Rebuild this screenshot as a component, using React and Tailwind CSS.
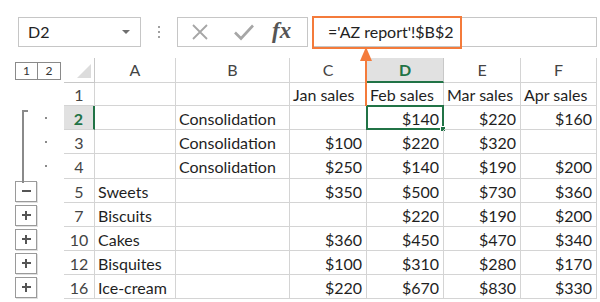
import React from "react";

const GRID = "border-[#d4d4d4]";

const cols = [
  { key: "a", label: "A", w: "w-[81px]" },
  { key: "b", label: "B", w: "w-[114px]" },
  { key: "c", label: "C", w: "w-[77px]" },
  { key: "d", label: "D", w: "w-[77px]" },
  { key: "e", label: "E", w: "w-[77px]" },
  { key: "f", label: "F", w: "w-[76px]" },
];

const rows = [
  { n: "1", h: "h-[23px]", c: "Jan sales", d: "Feb sales", e: "Mar sales", f: "Apr sales", head: true },
  { n: "2", h: "h-[24px]", b: "Consolidation", d: "$140", e: "$220", f: "$160", o: "dot", sel: true },
  { n: "3", h: "h-[24px]", b: "Consolidation", c: "$100", d: "$220", e: "$320", o: "dot" },
  { n: "4", h: "h-[25px]", b: "Consolidation", c: "$250", d: "$140", e: "$190", f: "$200", o: "dot" },
  { n: "5", h: "h-[24px]", a: "Sweets", c: "$350", d: "$500", e: "$730", f: "$360", o: "minus" },
  { n: "7", h: "h-[24px]", a: "Biscuits", d: "$220", e: "$190", f: "$200", o: "plus" },
  { n: "10", h: "h-[24px]", a: "Cakes", c: "$360", d: "$450", e: "$470", f: "$340", o: "plus" },
  { n: "12", h: "h-[24px]", a: "Bisquites", c: "$100", d: "$310", e: "$280", f: "$170", o: "plus" },
  { n: "16", h: "h-[24px]", a: "Ice-cream", c: "$220", d: "$670", e: "$830", f: "$330", o: "plus" },
];

function OutlineBtn({ sign }) {
  return (
    <div className="w-[22px] h-[21px] border border-[#9a9a9a] bg-white flex items-center justify-center shadow-[1px_1px_0_#e0e0e0]">
      {sign === "minus" ? (
        <div className="w-[9px] h-[2px] bg-[#555]" />
      ) : (
        <div className="relative w-[9px] h-[9px]">
          <div className="absolute left-0 top-[3.5px] w-[9px] h-[2px] bg-[#555]" />
          <div className="absolute top-0 left-[3.5px] w-[2px] h-[9px] bg-[#555]" />
        </div>
      )}
    </div>
  );
}

export default function App() {
  return (
    <div className="relative w-[600px] h-[302px] bg-white overflow-hidden font-['Lato','Noto_Sans',sans-serif] text-[#1f1f1f]">
      {/* Formula bar row */}
      <div className="flex items-center h-[31px] mt-[16px]">
        <div className="ml-[18px] w-[123px] h-[30px] border border-[#c6c6c6] flex items-center justify-between pl-[9px] pr-[10px]">
          <span className="text-[16px] text-[#222]">D2</span>
          <div className="w-0 h-0 border-l-[4px] border-r-[4px] border-t-[4px] border-l-transparent border-r-transparent border-t-[#6f6f6f]" />
        </div>
        <div className="ml-[16px] w-[4px] flex flex-col items-center gap-[3px]">
          <div className="w-[2px] h-[2px] bg-[#a0a0a0]" />
          <div className="w-[2px] h-[2px] bg-[#a0a0a0]" />
          <div className="w-[2px] h-[2px] bg-[#a0a0a0]" />
        </div>
        <div className="ml-[16px] w-[131px] h-[30px] border border-[#c6c6c6] flex items-center pl-[12px]">
          <svg width="20" height="20" viewBox="0 0 20 20" className="mt-[1px]">
            <path d="M3 3 L17 17 M17 3 L3 17" stroke="#a6a6a6" strokeWidth="1.8" fill="none" />
          </svg>
          <svg width="22" height="20" viewBox="0 0 22 20" className="ml-[23px] mt-[1px]">
            <path d="M2 10.5 L8 16.5 L20 3.5" stroke="#a6a6a6" strokeWidth="2.6" fill="none" />
          </svg>
          <span className="ml-[17px] font-['Liberation_Serif',serif] italic font-bold text-[23px] leading-none text-[#555] -mt-[2px]">fx</span>
        </div>
        <div className="relative ml-[5px] flex-1 mr-[3px] h-[30px] border border-[#c6c6c6]">
          <div className="absolute -left-[2px] -top-[2px] w-[150px] h-[33px] border-2 border-[#f47b3b] flex items-center pl-[14px]">
            <span className="text-[16px] text-[#222] whitespace-nowrap">='AZ report'!$B$2</span>
          </div>
        </div>
      </div>

      {/* Sheet */}
      <div className="mt-[11px]">
        {/* header row */}
        <div className="flex h-[25px]">
          <div className="w-[64px] flex items-center pl-[15px]">
            <div className="flex h-[18px] border border-[#8a8a8a]">
              <div className="w-[22px] border-r border-[#8a8a8a] flex items-center justify-center text-[12px] text-[#333]">1</div>
              <div className="w-[22px] flex items-center justify-center text-[12px] text-[#333]">2</div>
            </div>
          </div>
          <div className="w-[31px] border-r border-b border-[#c8c8c8] flex items-end justify-end pr-[3px] pb-[4px]">
            <div className="w-0 h-0 border-l-[14px] border-t-[14px] border-l-transparent border-t-transparent border-r-0 border-b-[14px] border-b-[#dcdcdc]" />
          </div>
          {cols.map((c) => (
            <div
              key={c.key}
              className={`${c.w} flex items-center justify-center text-[16px] ${
                c.key === "d"
                  ? "bg-[#e1e1e1] border-b-2 border-r border-b-[#217346] border-r-[#c8c8c8] text-[#217346] font-bold"
                  : "border-r border-b border-[#d4d4d4] text-[#444]"
              }`}
            >
              {c.label}
            </div>
          ))}
        </div>

        {rows.map((r) => (
          <div key={r.n} className={`flex ${r.h}`}>
            <div className="w-[64px] relative flex items-center">
              {r.o === "dot" && <div className="absolute left-[45px] top-[11px] w-[2px] h-[2px] bg-[#8a8a8a]" />}
              {(r.o === "minus" || r.o === "plus") && (
                <div className="ml-[15px]">
                  <OutlineBtn sign={r.o} />
                </div>
              )}
            </div>
            <div
              className={`w-[31px] flex items-center justify-center pt-[2px] text-[16px] ${
                r.sel
                  ? "bg-[#e1e1e1] border-r-2 border-r-[#217346] border-b border-b-[#d4d4d4] text-[#217346] font-bold"
                  : "border-r border-b border-[#d4d4d4] text-[#444]"
              }`}
            >
              {r.n}
            </div>
            {cols.map((c) => {
              const v = r[c.key];
              const num = v && v.startsWith("$");
              const isSel = r.sel && c.key === "d";
              return (
                <div
                  key={c.key}
                  className={`relative ${c.w} border-r border-b ${GRID} flex items-center pt-[2px] text-[16px] whitespace-nowrap ${
                    num ? "justify-end pr-[4px]" : "justify-start pl-[3px]"
                  }`}
                >
                  {v}
                  {isSel && (
                    <div className="absolute -left-[1px] -top-[1px] -right-[1px] -bottom-[1px] border-2 border-[#217346]">
                      <div className="absolute -right-[4px] -bottom-[4px] w-[6px] h-[6px] bg-[#217346] border border-white" />
                    </div>
                  )}
                </div>
              );
            })}
          </div>
        ))}
      </div>

      {/* outline bracket */}
      <div className="absolute left-[22px] top-[110px] w-[6px] h-[73px] border-l-2 border-t-2 border-[#8a8a8a]" />

      {/* annotation arrow */}
      <div className="absolute left-[365px] top-[56px] w-[2px] h-[50px] bg-[#f47b3b]" />
      <div className="absolute left-[360px] top-[47px] w-0 h-0 border-l-[6px] border-r-[6px] border-b-[14px] border-l-transparent border-r-transparent border-b-[#f47b3b]" />
    </div>
  );
}
